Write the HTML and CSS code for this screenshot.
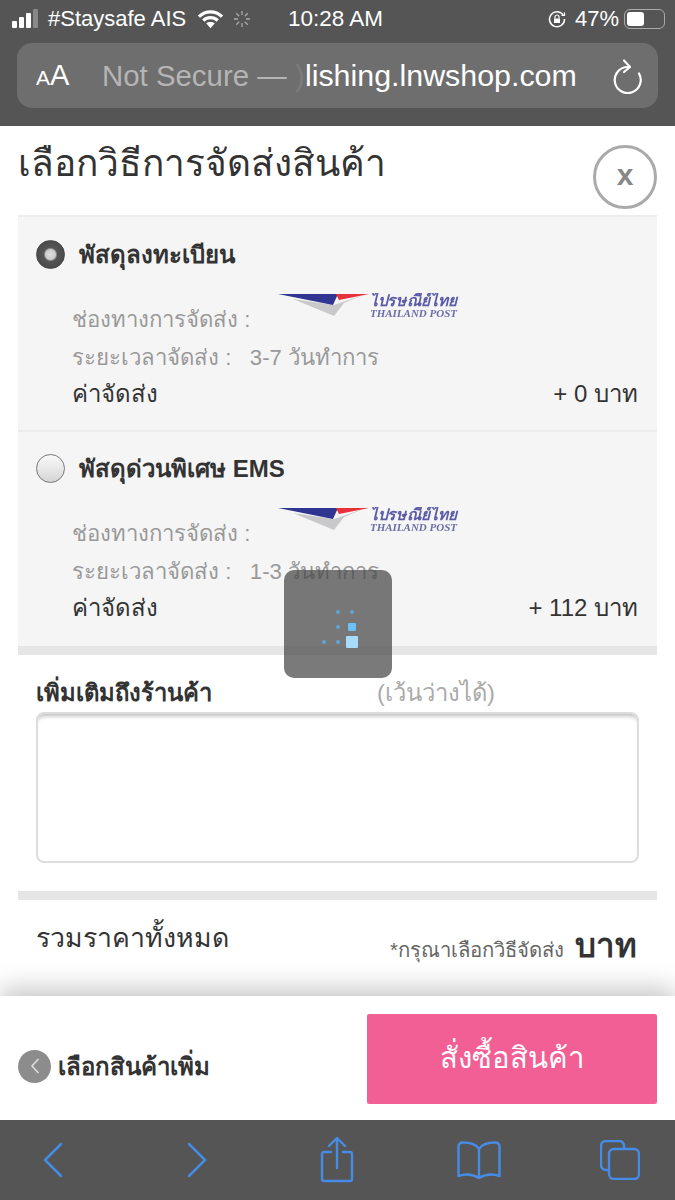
FILE: index.html
```html
<!DOCTYPE html>
<html>
<head>
<meta charset="UTF-8">
<title>เลือกวิธีการจัดส่งสินค้า</title>
<link rel="stylesheet" href="styles.css">
</head>
<body>
	<!-- browser top -->
	<header class="chrome-top">
		<div class="status">
			<div class="status-left">
				<svg class="signal" width="27" height="20" viewBox="0 0 27 20"><rect x="0" y="12" width="5" height="7" rx="1" fill="#fff"/><rect x="7" y="8" width="5" height="11" rx="1" fill="#fff"/><rect x="14" y="4" width="5" height="15" rx="1" fill="#fff"/><rect x="21" y="0" width="5" height="19" rx="1" fill="#888"/></svg>
				<span class="carrier">#Staysafe AIS</span>
				<svg class="wifi" width="27" height="20" viewBox="0 0 28 20" fill="none" stroke="#fff" stroke-width="3.4"><path d="M2 7.500C9 1 19 1 26 7.500"/><path d="M6.500 11.500C11 7.500 17 7.500 21.500 11.500"/><path d="M14 19.500l-4.500-5c2.500-2 6.500-2 9 0z" fill="#fff" stroke="none"/></svg>
				<svg width="18" height="18" viewBox="0 0 18 18" stroke="#aaa" stroke-width="1.300"><path d="M9 1v4M9 13v4M1 9h4M13 9h4M3.300 3.300l2.900 2.900M11.800 11.800l2.900 2.900M3.300 14.700l2.900-2.900M11.800 6.200l2.900-2.900"/></svg>
			</div>
			<span class="clock">10:28 AM</span>
			<div class="status-right">
				<svg width="18" height="18" viewBox="0 0 18 18" fill="none" stroke="#fff" stroke-width="1.500"><path d="M15.500 5.500A7.500 7.500 0 1 0 16.500 9"/><path d="M13.500 5.500h3v-3" stroke-width="1.200"/><rect x="6" y="8.500" width="6" height="4.500" fill="#fff" stroke="none"/><path d="M7 8.500V7a2 2 0 0 1 4 0v1.500" stroke-width="1.200"/></svg>
				<span class="batt-text">47%</span>
				<div class="battery"><div class="battery-level"></div></div>
			</div>
		</div>
		<div class="urlbar">
			<span class="aa"><small>A</small>A</span>
			<span class="url"><span class="url-dim">Not Secure — </span><span class="url-cut">)</span>lishing.lnwshop.com</span>
			<svg width="30" height="36" viewBox="0 0 30 36" fill="none" stroke="#fff" stroke-width="2.200" stroke-linecap="round" stroke-linejoin="round"><path d="M26 15.500A13 13 0 1 1 15 9"/><path d="M11 2.500L17 9l-6 5"/></svg>
		</div>
	</header>

	<main class="sheet">
		<div class="sheet-head">
			<h1>เลือกวิธีการจัดส่งสินค้า</h1>
			<button class="close">x</button>
		</div>

		<div class="options">
			<div class="option">
				<div class="option-title"><span class="radio radio-on"></span>พัสดุลงทะเบียน</div>
				<div class="row row-channel">
					<span>ช่องทางการจัดส่ง :</span>
					<svg class="post-logo" width="182" height="28" viewBox="0 0 182 28"><polygon points="15,6 56,12 88,1 66,10 56,23" fill="#c9c9cc"/><polygon points="0,1 60,1 55,12" fill="#2f3590"/><polygon points="58,1 91,1 61,7" fill="#e8303a"/><text x="92" y="13" class="logo-th" textLength="87" lengthAdjust="spacingAndGlyphs">ไปรษณีย์ไทย</text><text x="92" y="24" class="logo-en" textLength="87" lengthAdjust="spacingAndGlyphs">THAILAND POST</text></svg>
				</div>
				<div class="row">ระยะเวลาจัดส่ง : &nbsp; 3-7 วันทำการ</div>
				<div class="row row-cost"><span>ค่าจัดส่ง</span><span>+ 0 บาท</span></div>
			</div>
			<div class="option">
				<div class="option-title"><span class="radio"></span>พัสดุด่วนพิเศษ EMS</div>
				<div class="row row-channel">
					<span>ช่องทางการจัดส่ง :</span>
					<svg class="post-logo" width="182" height="28" viewBox="0 0 182 28"><polygon points="15,6 56,12 88,1 66,10 56,23" fill="#c9c9cc"/><polygon points="0,1 60,1 55,12" fill="#2f3590"/><polygon points="58,1 91,1 61,7" fill="#e8303a"/><text x="92" y="13" class="logo-th" textLength="87" lengthAdjust="spacingAndGlyphs">ไปรษณีย์ไทย</text><text x="92" y="24" class="logo-en" textLength="87" lengthAdjust="spacingAndGlyphs">THAILAND POST</text></svg>
				</div>
				<div class="row">ระยะเวลาจัดส่ง : &nbsp; 1-3 วันทำการ</div>
				<div class="row row-cost"><span>ค่าจัดส่ง</span><span>+ 112 บาท</span></div>
			</div>
		</div>

		<div class="note">
			<div class="note-head"><b>เพิ่มเติมถึงร้านค้า</b><span>(เว้นว่างได้)</span></div>
			<div class="note-box"></div>
		</div>

		<div class="total">
			<span class="total-label">รวมราคาทั้งหมด</span>
			<span class="total-hint">*กรุณาเลือกวิธีจัดส่ง</span>
			<b class="total-unit">บาท</b>
		</div>
	</main>

	<div class="footer">
		<div class="more"><span class="more-icon"><svg width="12" height="18" viewBox="0 0 12 18" fill="none" stroke="#ddd" stroke-width="1.600"><path d="M9.500 2L3 9l6.500 7"/></svg></span>เลือกสินค้าเพิ่ม</div>
		<button class="buy">สั่งซื้อสินค้า</button>
	</div>

	<!-- browser bottom -->
	<nav class="chrome-bottom">
		<svg width="22" height="36" viewBox="0 0 22 36" fill="none" stroke="#468ce6" stroke-width="2.500" stroke-linecap="round"><path d="M19 2L3 18l16 16"/></svg>
		<svg width="22" height="36" viewBox="0 0 22 36" fill="none" stroke="#468ce6" stroke-width="2.500" stroke-linecap="round"><path d="M3 2l16 16L3 34"/></svg>
		<svg width="36" height="46" viewBox="0 0 36 46" fill="none" stroke="#468ce6" stroke-width="2.400" stroke-linecap="round" stroke-linejoin="round"><path d="M11 15H4a2 2 0 0 0-2 2v25a2 2 0 0 0 2 2h26a2 2 0 0 0 2-2V17a2 2 0 0 0-2-2h-7"/><path d="M17 31V2M9 9l8-8 8 8"/></svg>
		<svg width="44" height="38" viewBox="0 0 44 38" fill="none" stroke="#468ce6" stroke-width="2.400" stroke-linejoin="round"><path d="M22 8C19 3 13 1.500 6 1.500 3 1.500 1.500 3 1.500 6v29c6-2 14-2 20.500 2 6.500-4 14.500-4 20.500-2V6c0-3-1.500-4.500-4.500-4.500C31 1.500 25 3 22 8z"/><path d="M22 8v29"/></svg>
		<svg width="40" height="40" viewBox="0 0 40 40" fill="none" stroke="#468ce6" stroke-width="2.400"><path d="M8 30H6a5 5 0 0 1-5-5V6a5 5 0 0 1 5-5h13a5 5 0 0 1 5 5v3"/><rect x="9" y="9" width="30" height="30" rx="5"/></svg>
	</nav>

	<!-- loading popup -->
	<div class="loader">
		<div class="dots">
			<i class="dot-off"></i><i></i><i></i>
			<i class="dot-off"></i><i></i><i class="dot-mid"></i>
			<i></i><i></i><i class="dot-big"></i>
		</div>
	</div>
</body>
</html>
```

FILE: styles.css
```css
* {
  box-sizing: border-box;
}

html, body {
  margin: 0;
  padding: 0;
}

body {
  position: relative;
  width: 675px;
  height: 1200px;
  overflow: hidden;
  background: #fff;
  color: #333;
  font-family: "Liberation Sans", "Noto Sans", "DejaVu Sans", sans-serif;
}

/* browser top */
.chrome-top {
  height: 126px;
  background: #555;
  color: #fff;
}

.status {
  height: 37px;
  display: flex;
  align-items: center;
  padding: 0 10px 0 12px;
  font-size: 22px;
}

.status-left {
  width: 276px;
  display: flex;
  align-items: center;
  gap: 9px;
}

.wifi {
  margin-left: 2px;
}

.clock {
  font-size: 22.500px;
}

.status-right {
  margin-left: auto;
  display: flex;
  align-items: center;
  gap: 9px;
}

.batt-text {
  margin-right: -4px;
  font-size: 22px;
}

.battery {
  width: 41px;
  height: 20px;
  padding: 2px;
  border: 1px solid #aaa;
  border-radius: 6px;
}

.battery-level {
  width: 17px;
  height: 100%;
  background: #fff;
  border-radius: 3px;
}

.urlbar {
  height: 65px;
  margin: 6px 17px 0;
  padding: 0 15px 0 19px;
  display: flex;
  align-items: center;
  background: #6e6e6e;
  border-radius: 15px;
}

.aa {
  width: 66px;
  font-size: 29px;
}

.aa small {
  font-size: 21px;
}

.url {
  flex: 1;
  font-size: 30.400px;
  white-space: nowrap;
}

.url-dim {
  font-size: 29.400px;
  color: #b5b5b5;
}

.url-cut {
  color: #7c7c7c;
}

/* sheet */
.sheet {
  height: 870px;
  padding: 0 18px;
  overflow: hidden;
}

.sheet-head {
  height: 91px;
  display: flex;
  justify-content: space-between;
  border-bottom: 2px solid #ececec;
}

h1 {
  margin: 16px 0 0;
  font-size: 37px;
  line-height: 44px;
  font-weight: normal;
  color: #333;
}

.close {
  width: 64px;
  height: 64px;
  margin-top: 19px;
  padding: 0 0 4px;
  background: #fff;
  border: 3px solid #aaa;
  border-radius: 50%;
  color: #888;
  font-family: "Liberation Sans", sans-serif;
  font-size: 30px;
  font-weight: bold;
  line-height: 1;
}

.options {
  height: 438px;
  background: #f5f5f5;
  border-bottom: 9px solid #e6e6e6;
}

.option {
  height: 215px;
  padding: 19px 19px 0 18px;
  border-bottom: 2px solid #ececec;
}

.option:last-child {
  border-bottom: 0;
  padding-top: 18px;
}

.option-title {
  display: flex;
  align-items: center;
  gap: 14px;
  height: 36px;
  font-size: 24px;
  font-weight: bold;
  color: #333;
}

.radio {
  width: 29px;
  height: 29px;
  flex: none;
  border-radius: 50%;
  background: linear-gradient(#fafafa, #d5d5d5);
  border: 1.500px solid #777;
}

.radio-on {
  background: radial-gradient(circle, #ddd 0, #ccc 26%, #555 36%, #444 100%);
  border-color: #444;
}

.row {
  height: 37px;
  padding-left: 36px;
  display: flex;
  align-items: center;
  font-size: 22.200px;
  color: #999;
}

.row-channel {
  height: 38px;
  margin-top: 28px;
}

.post-logo {
  margin: -24px 0 0 28px;
  filter: blur(.5px);
}

.logo-th {
  font-size: 16px;
  font-style: italic;
  font-weight: bold;
  fill: #5b5ba8;
}

.logo-en {
  font-size: 11px;
  font-style: italic;
  font-weight: bold;
  fill: #6c6ca8;
  font-family: "Liberation Serif", serif;
}

.row-cost {
  justify-content: space-between;
  font-size: 24px;
  color: #333;
}

/* note */
.note {
  height: 245px;
  padding: 19px 18px 0;
  border-bottom: 9px solid #e6e6e6;
}

.note-head {
  height: 37px;
  display: flex;
  align-items: center;
  font-size: 23.800px;
}

.note-head b {
  width: 341px;
  color: #333;
}

.note-head span {
  color: #aaa;
}

.note-box {
  height: 151px;
  margin-top: 1px;
  background: #fff;
  border: 2px solid #ddd;
  border-radius: 8px;
  box-shadow: inset 0 5px 4px -3px #bbb;
}

/* total */
.total {
  display: flex;
  align-items: center;
  padding: 9px 20px 0 18px;
}

.total-label {
  font-size: 26.700px;
  color: #333;
  margin-top: -6px;
}

.total-hint {
  margin-left: auto;
  margin-top: 18px;
  font-size: 20.300px;
  color: #666;
}

.total-unit {
  margin-left: 11px;
  margin-top: 10px;
  font-size: 33px;
}

/* bottom bar */
.footer {
  position: relative;
  height: 124px;
  padding: 0 18px;
  display: flex;
  align-items: center;
  justify-content: space-between;
  background: #fff;
  box-shadow: 0 -8px 24px rgba(0, 0, 0, .22);
}

.more {
  display: flex;
  align-items: center;
  gap: 7px;
  margin-top: 16px;
  font-size: 24px;
  font-weight: bold;
  color: #333;
}

.more-icon {
  width: 33px;
  height: 33px;
  display: flex;
  align-items: center;
  justify-content: center;
  background: #8c8c8c;
  border-radius: 50%;
}

.buy {
  width: 290px;
  height: 90px;
  margin-top: 2px;
  padding-bottom: 4px;
  background: #f25f95;
  border: 0;
  border-radius: 2px;
  color: #fff;
  font-family: inherit;
  font-size: 29.300px;
}

/* browser bottom */
.chrome-bottom {
  position: relative;
  height: 80px;
  background: #555;
  display: grid;
  grid-template-columns: 144px 134px 137px 143px auto;
  align-items: center;
  padding-left: 42px;
}

.loader {
  position: absolute;
  left: 284px;
  top: 570px;
  width: 108px;
  height: 108px;
  border-radius: 10px;
  background: rgba(70, 70, 70, .72);
  display: flex;
  align-items: center;
  justify-content: center;
}

.dots {
  display: grid;
  grid-template-columns: repeat(3, 14px);
  grid-auto-rows: 15px;
  place-items: center;
  margin: 5px 0 0 0;
}

.dots i {
  width: 4px;
  height: 4px;
  border-radius: 50%;
  background: #5fa4d8;
}

.dots .dot-off {
  visibility: hidden;
}

.dots .dot-mid {
  width: 8px;
  height: 8px;
  border-radius: 1px;
  background: #6cc0f5;
}

.dots .dot-big {
  width: 12px;
  height: 12px;
  border-radius: 1px;
  background: #a8dcfb;
}
```
